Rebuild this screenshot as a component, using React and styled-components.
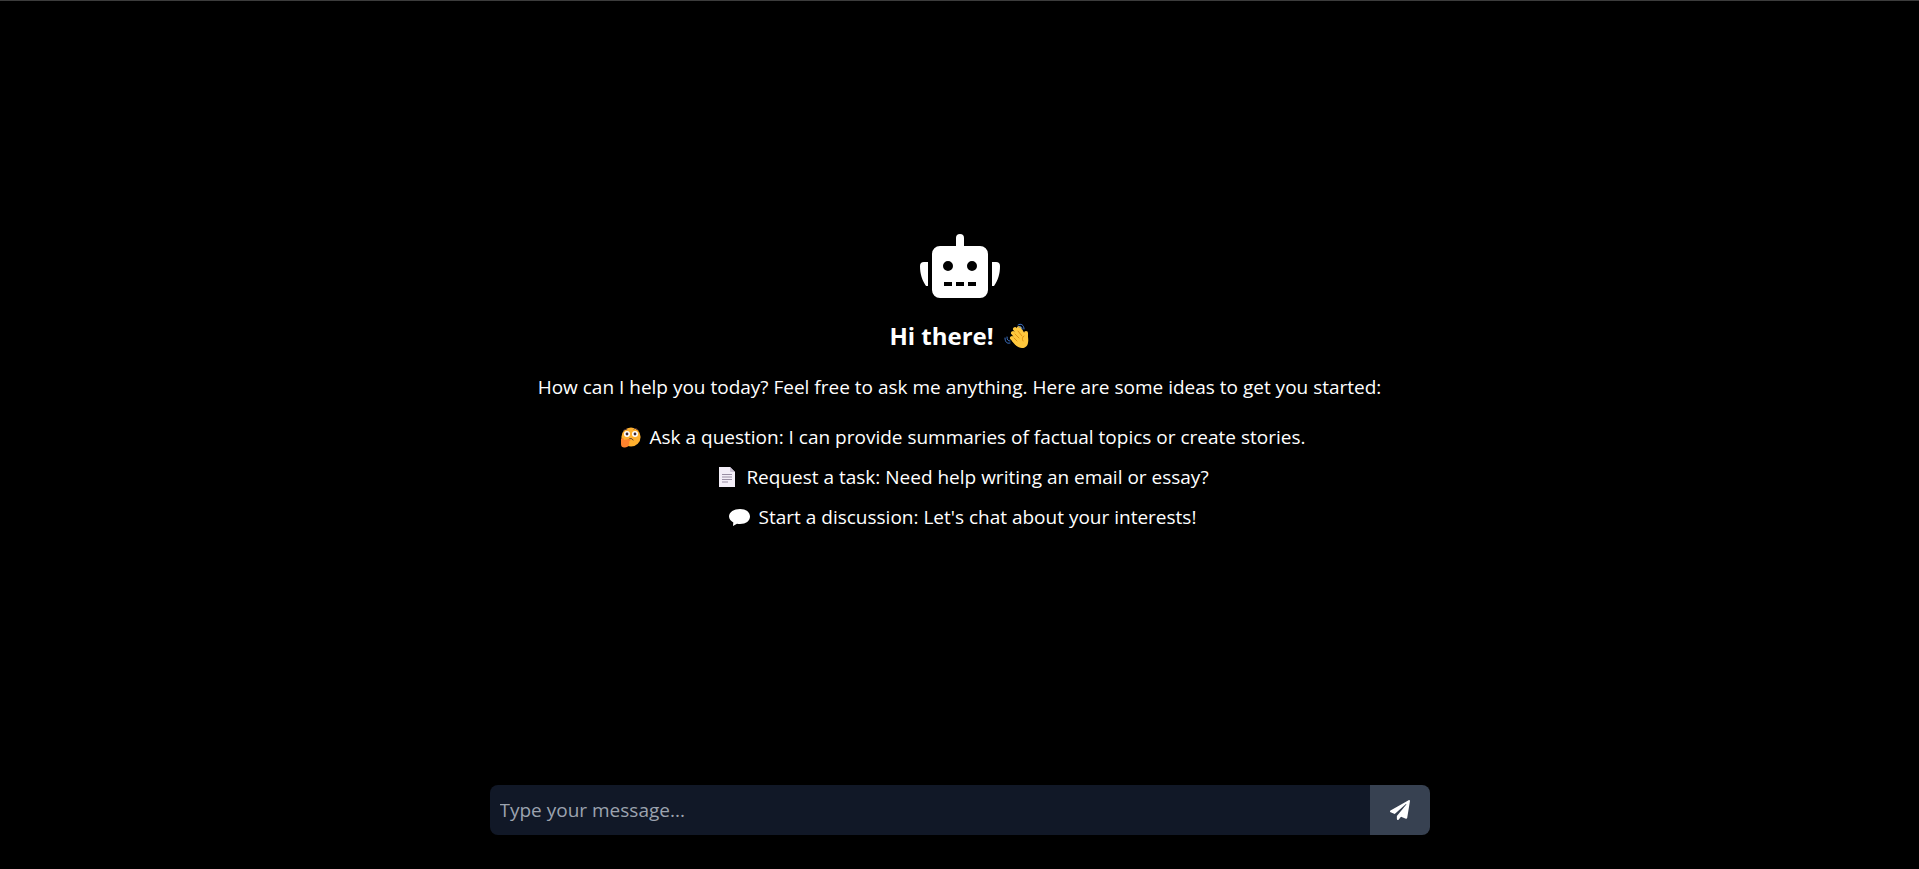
import React, { useState } from "react";
import styled, { createGlobalStyle } from "styled-components";
import { FaPaperPlane } from "react-icons/fa";

const GlobalStyle = createGlobalStyle`
  *, *::before, *::after { box-sizing: border-box; }
  body { margin: 0; background: #000; }
  body, input, button { font-family: "Open Sans", "Noto Sans", sans-serif; }
`;

const Page = styled.div`
  display: flex;
  flex-direction: column;
  min-height: 100vh;
  color: #fff;
  background: #000;
  border-top: 1px solid #3c3c3c;
`;

const Welcome = styled.main`
  flex: 1;
  display: flex;
  flex-direction: column;
  align-items: center;
  justify-content: center;
  padding: 0 20px 20px;
  font-size: 19px;
  line-height: 30px;
  text-align: center;
`;

const RobotIcon = styled.svg`
  width: 80px;
  height: 64px;
  fill: #fff;
`;

const Title = styled.h1`
  display: flex;
  align-items: center;
  gap: 10px;
  margin: 20px 0 18px;
  font-size: 24px;
  line-height: 36px;
  font-weight: 700;
`;

const Intro = styled.p`
  margin: 0;
`;

const Ideas = styled.ul`
  display: flex;
  flex-direction: column;
  gap: 10px;
  margin: 20px 0 0;
  padding: 0 0 0 4px;
  list-style: none;
`;

const Idea = styled.li`
  display: flex;
  align-items: center;
  justify-content: center;
  gap: 8px;
`;

const Emoji = styled.svg`
  flex: none;
  width: ${(p) => p.$size}px;
  height: ${(p) => p.$size}px;
`;

const Composer = styled.form`
  display: flex;
  width: calc(100% - 40px);
  max-width: 940px;
  height: 50px;
  margin: 0 auto 34px;
  border-radius: 8px;
  overflow: hidden;
`;

const MessageInput = styled.input`
  flex: 1;
  min-width: 0;
  padding: 0 10px;
  border: 0;
  outline: 0;
  color: #fff;
  background: #111827;
  font-size: 19px;
  &::placeholder { color: #9ca3af; opacity: 1; }
`;

const SendButton = styled.button`
  display: grid;
  place-items: center;
  width: 60px;
  padding: 0;
  border: 0;
  color: #fff;
  background: #374151;
  font-size: 20px;
  cursor: pointer;
`;

const Robot = () => (
  <RobotIcon viewBox="0 0 80 64" aria-hidden="true">
    <path
      fillRule="evenodd"
      d="M36 12V4a4 4 0 0 1 8 0v8h16a8 8 0 0 1 8 8v36a8 8 0 0 1-8 8H20a8 8 0 0 1-8-8V20a8 8 0 0 1 8-8zM28 27a5 5 0 1 0 0 10 5 5 0 0 0 0-10zM52 27a5 5 0 1 0 0 10 5 5 0 0 0 0-10zM24 48v4h8v-4zM36 48v4h8v-4zM48 48v4h8v-4z"
    />
    <path d="M8 28v24H6C2 46 0 40 0 32a4 4 0 0 1 4-4zM72 28v24h2c4-6 6-12 6-20a4 4 0 0 0-4-4z" />
  </RobotIcon>
);

const Wave = () => (
  <Emoji $size={26} viewBox="0 0 26 26" aria-hidden="true">
    <g stroke="#ffc83d" strokeWidth="4" strokeLinecap="round">
      <path d="M9 10l8 9M11 6l8 10M15 5l6 10M8 15l6 6" />
      <path d="M22 10v8" />
    </g>
    <path d="M9 14l12-2 3 2c1 7-1 11-6 11-4 0-7-3-10-7z" fill="#ffc83d" />
    <path d="M11 11l4 4M14 8l4 5M10 15l3 3M20 13c-2 1-2 3-1 5" fill="none" stroke="#d67d00" strokeWidth="0.7" strokeLinecap="round" />
    <path d="M14 2c3-2 6 0 6 4M15 4c2-1 3 0 3 2M1 15c0 4 2 6 5 5M3 14c0 3 1 4 3 4" fill="none" stroke="#3f74c8" strokeWidth="1" strokeLinecap="round" />
  </Emoji>
);

const Thinking = () => (
  <Emoji $size={24} viewBox="0 0 24 24" aria-hidden="true">
    <circle cx="13" cy="12" r="9.6" fill="#ffb02e" />
    <circle cx="9" cy="9" r="3" fill="#fff" />
    <circle cx="17" cy="9" r="3" fill="#fff" />
    <circle cx="9" cy="9" r="1.4" fill="#402a32" />
    <circle cx="17" cy="9" r="1.4" fill="#402a32" />
    <path d="M6 5l3-1M16 4c1-1 3-1 4 1M10 15c2-2 4-2 5 0" fill="none" stroke="#402a32" strokeWidth="1" strokeLinecap="round" />
    <path d="M3 14c1-2 3-1 3 1l5-1c2 0 2 2 0 2.500 1 3-1 6-4 6-3 0-4-1-4-4z" fill="#ff822d" />
  </Emoji>
);

const Document = () => (
  <Emoji $size={24} viewBox="0 0 24 24" aria-hidden="true">
    <path d="M5 2h11l5 5v15H5z" fill="#f3eef8" />
    <path d="M16 2l5 5h-4a1 1 0 0 1-1-1z" fill="#cdc4d6" />
    <path d="M8 9.500h10M8 12h10M8 14.500h10M8 17h6" stroke="#998ea4" strokeWidth="1" />
  </Emoji>
);

const Bubble = () => (
  <Emoji $size={24} viewBox="0 0 24 24" aria-hidden="true">
    <path d="M13 4c6 0 10 3 10 7.500S19 19 13 19c-1 0-2 0-3-.3L6 21l.3-3.500C4 16 2 14 2 11.500 2 7 7 4 13 4z" fill="#fff" />
  </Emoji>
);

const ideas = [
  [Thinking, "Ask a question: I can provide summaries of factual topics or create stories."],
  [Document, "Request a task: Need help writing an email or essay?"],
  [Bubble, "Start a discussion: Let's chat about your interests!"],
];

export default function App() {
  const [message, setMessage] = useState("");
  return (
    <Page>
      <GlobalStyle />
      <Welcome>
        <Robot />
        <Title>
          Hi there! <Wave />
        </Title>
        <Intro>How can I help you today? Feel free to ask me anything. Here are some ideas to get you started:</Intro>
        <Ideas>
          {ideas.map(([Icon, text]) => (
            <Idea key={text}>
              <Icon />
              <span>{text}</span>
            </Idea>
          ))}
        </Ideas>
      </Welcome>
      <Composer onSubmit={(e) => e.preventDefault()}>
        <MessageInput
          type="text"
          aria-label="Message"
          placeholder="Type your message..."
          value={message}
          onChange={(e) => setMessage(e.target.value)}
        />
        <SendButton type="submit" aria-label="Send message">
          <FaPaperPlane />
        </SendButton>
      </Composer>
    </Page>
  );
}
